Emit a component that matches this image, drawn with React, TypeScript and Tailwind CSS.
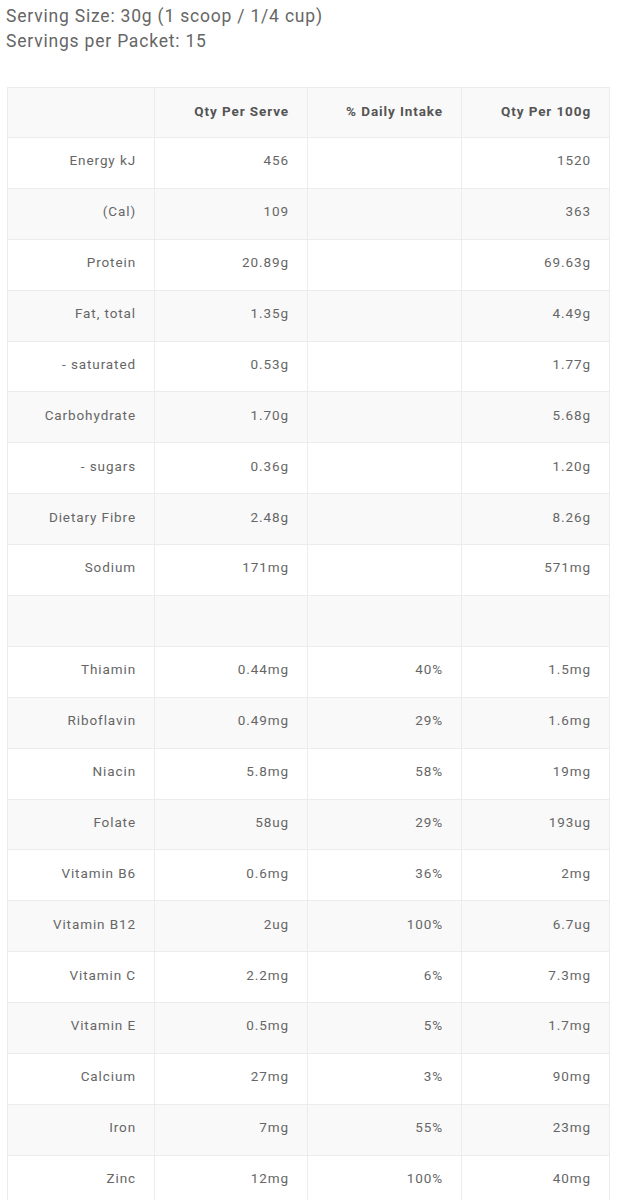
import React from 'react';

type Row = [string, string, string, string];

const rows: Row[] = [
  ['Energy kJ', '456', '', '1520'],
  ['(Cal)', '109', '', '363'],
  ['Protein', '20.89g', '', '69.63g'],
  ['Fat, total', '1.35g', '', '4.49g'],
  ['- saturated', '0.53g', '', '1.77g'],
  ['Carbohydrate', '1.70g', '', '5.68g'],
  ['- sugars', '0.36g', '', '1.20g'],
  ['Dietary Fibre', '2.48g', '', '8.26g'],
  ['Sodium', '171mg', '', '571mg'],
  ['', '', '', ''],
  ['Thiamin', '0.44mg', '40%', '1.5mg'],
  ['Riboflavin', '0.49mg', '29%', '1.6mg'],
  ['Niacin', '5.8mg', '58%', '19mg'],
  ['Folate', '58ug', '29%', '193ug'],
  ['Vitamin B6', '0.6mg', '36%', '2mg'],
  ['Vitamin B12', '2ug', '100%', '6.7ug'],
  ['Vitamin C', '2.2mg', '6%', '7.3mg'],
  ['Vitamin E', '0.5mg', '5%', '1.7mg'],
  ['Calcium', '27mg', '3%', '90mg'],
  ['Iron', '7mg', '55%', '23mg'],
  ['Zinc', '12mg', '100%', '40mg'],
];

const cols = ['w-[147px]', 'w-[153px]', 'w-[154px]', 'w-[148px]'];

const App: React.FC = () => {
  return (
    <div className="bg-white min-h-[1200px] font-['Roboto',sans-serif]">
      {/* serving info */}
      <div className="pl-[6px] pt-[4px] text-[17.5px] leading-[25px] tracking-[0.8px] text-[#666]">
        <p>Serving Size: 30g (1 scoop / 1/4 cup)</p>
        <p>Servings per Packet: 15</p>
      </div>

      {/* nutrition table */}
      <div className="ml-[7px] mt-[33px] w-[603px] border-l border-t border-[#ececec]">
        <div className="flex h-[50px] bg-[#f9f9f9] border-b border-[#ececec]">
          {['', 'Qty Per Serve', '% Daily Intake', 'Qty Per 100g'].map((h, i) => (
            <div
              key={i}
              className={`${cols[i]} flex items-center justify-end pr-[18px] pb-[3px] border-r border-[#ececec] text-[13.5px] tracking-[0.9px] font-bold text-[#555]`}
            >
              {h}
            </div>
          ))}
        </div>
        {rows.map((r, ri) => (
          <div
            key={ri}
            className={`flex h-[50.9px] border-b border-[#ececec] ${ri % 2 === 1 ? 'bg-[#f9f9f9]' : 'bg-white'}`}
          >
            {r.map((c, ci) => (
              <div
                key={ci}
                className={`${cols[ci]} flex items-center justify-end pr-[18px] pb-[5px] border-r border-[#ececec] text-[13.5px] tracking-[0.9px] text-[#666]`}
              >
                {c}
              </div>
            ))}
          </div>
        ))}
      </div>
    </div>
  );
};

export default App;
